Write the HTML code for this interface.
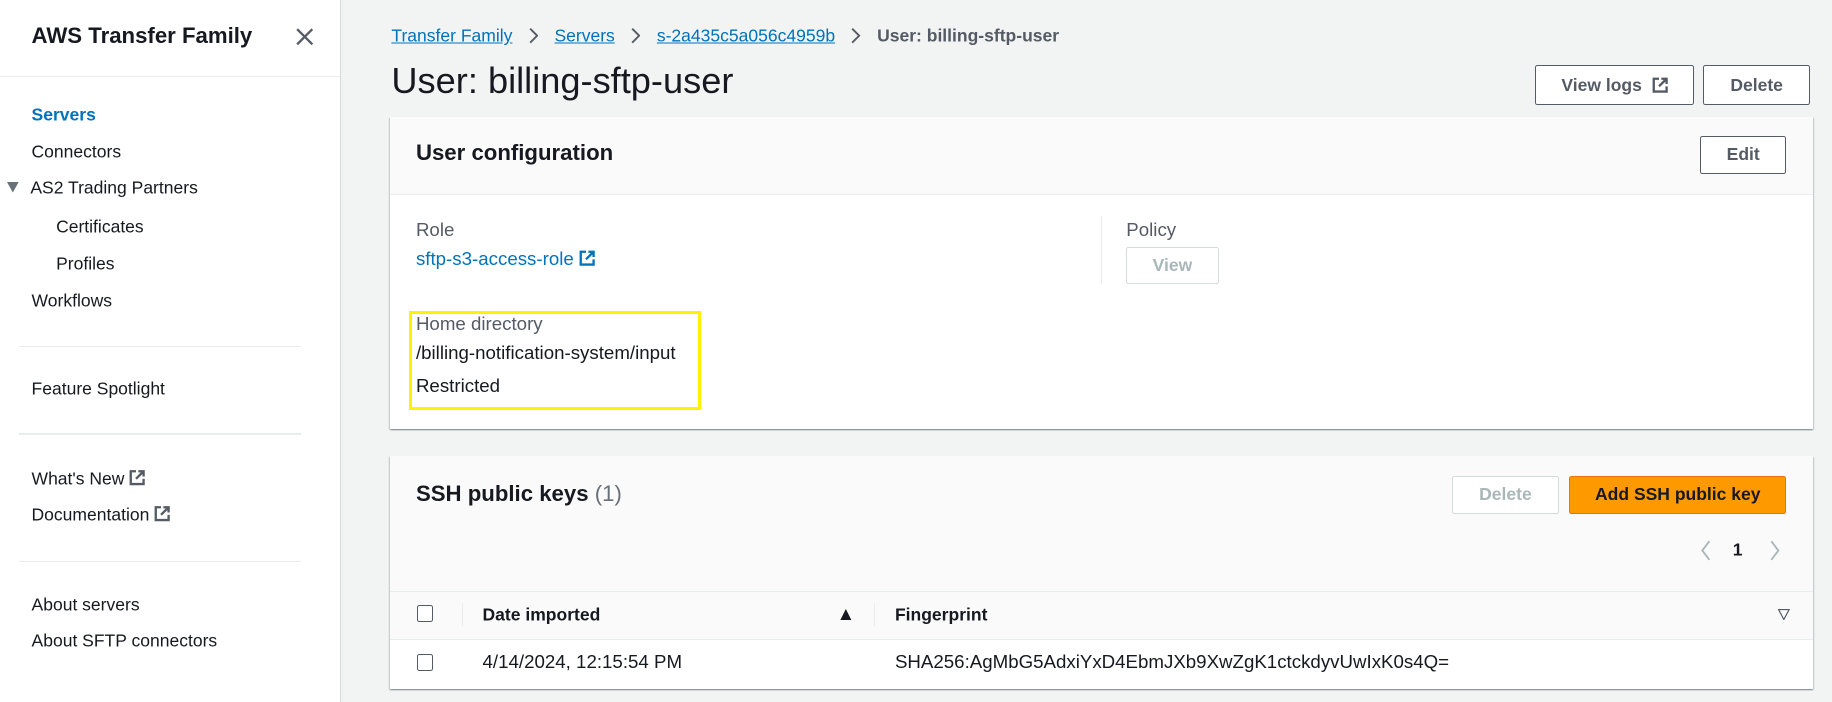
<!DOCTYPE html>
<html><head><meta charset="utf-8"><style>
html,body{margin:0;padding:0}
body{width:1568px;height:601px;zoom:1.16837;background:#f2f3f3;font-family:"Liberation Sans",sans-serif;color:#16191f;font-size:15px;position:relative;overflow:hidden}
.a{position:absolute;white-space:nowrap}
.side{position:absolute;left:0;top:0;width:291px;height:601px;background:#fff;border-right:1px solid #d5dbdb}
.hr{position:absolute;height:1px;background:#eaeded}
.nav{position:absolute;left:27px;font-size:15px;color:#16191f;transform:translateY(-50%)}
.blue{color:#0073bb}
.btn{position:absolute;box-sizing:border-box;border:1px solid #545b64;background:#fff;border-radius:2px;font-weight:bold;color:#545b64;font-size:15px;display:flex;align-items:center;justify-content:center}
.card{position:absolute;background:#fff;font-size:16px;box-shadow:0 1px 1px rgba(0,28,36,.3),1px 1px 1px rgba(0,28,36,.15),-1px 1px 1px rgba(0,28,36,.15)}
.mid{transform:translateY(-50%)}
.cb{position:absolute;width:12px;height:13px;border:1px solid #545b64;border-radius:2px;background:#fff}
.chev{display:inline-block;margin:0 14px;vertical-align:-2px}
</style></head><body>
<div class="side">
 <div class="a mid" style="left:27px;top:31px;font-size:19px;font-weight:bold">AWS Transfer Family</div>
 <svg class="a" style="left:253px;top:24px" width="15" height="15" viewBox="0 0 15 15"><path d="M1 1L14 14M14 1L1 14" stroke="#545b64" stroke-width="2"/></svg>
 <div class="hr" style="left:0;top:65px;width:291px"></div>
 <div class="nav blue" style="top:98px;font-weight:bold">Servers</div>
 <div class="nav" style="top:130px">Connectors</div>
 <div class="nav" style="top:161px;left:26px">AS2 Trading Partners</div>
 <svg class="a" style="left:6px;top:156px" width="10" height="9"><path d="M0 0H10L5 9Z" fill="#687078"/></svg>
 <div class="nav" style="top:194px;left:48px">Certificates</div>
 <div class="nav" style="top:226px;left:48px">Profiles</div>
 <div class="nav" style="top:258px">Workflows</div>
 <div class="hr" style="left:16px;top:296px;width:242px"></div>
 <div class="nav" style="top:333px">Feature Spotlight</div>
 <div class="hr" style="left:16px;top:371px;width:242px"></div>
 <div class="nav" style="top:410px">What's New <svg width="14" height="14" viewBox="0 0 14 14" style="vertical-align:-1px"><path d="M6 1.5H1.5V12.5H12.5V8M8 1.5H12.5V6M12.5 1.5L6 8" stroke="#545b64" stroke-width="2" fill="none"/></svg></div>
 <div class="nav" style="top:441px">Documentation <svg width="14" height="14" viewBox="0 0 14 14" style="vertical-align:-1px"><path d="M6 1.5H1.5V12.5H12.5V8M8 1.5H12.5V6M12.5 1.5L6 8" stroke="#545b64" stroke-width="2" fill="none"/></svg></div>
 <div class="hr" style="left:16px;top:480px;width:242px"></div>
 <div class="nav" style="top:518px">About servers</div>
 <div class="nav" style="top:549px">About SFTP connectors</div>
</div>

<div class="a mid" style="left:335px;top:31px;font-size:15px;color:#545b64"><span class="blue" style="text-decoration:underline">Transfer Family</span><svg class="chev" width="8" height="14"><path d="M1 1L7 7L1 13" stroke="#545b64" stroke-width="1.6" fill="none"/></svg><span class="blue" style="text-decoration:underline">Servers</span><svg class="chev" width="8" height="14"><path d="M1 1L7 7L1 13" stroke="#545b64" stroke-width="1.6" fill="none"/></svg><span class="blue" style="text-decoration:underline">s-2a435c5a056c4959b</span><svg class="chev" width="8" height="14"><path d="M1 1L7 7L1 13" stroke="#545b64" stroke-width="1.6" fill="none"/></svg><b>User: billing-sftp-user</b></div>
<div class="a mid" style="left:335px;top:69px;font-size:31px">User: billing-sftp-user</div>
<div class="btn" style="left:1314px;top:56px;width:136px;height:34px">View logs&nbsp;&nbsp;<svg width="14" height="14" viewBox="0 0 14 14"><path d="M6 1.5H1.5V12.5H12.5V8M8 1.5H12.5V6M12.5 1.5L6 8" stroke="#545b64" stroke-width="2" fill="none"/></svg></div>
<div class="btn" style="left:1458px;top:56px;width:91px;height:34px">Delete</div>

<div class="card" style="left:334px;top:100px;width:1218px;height:267px">
 <div style="position:absolute;left:0;top:0;right:0;height:66px;background:#fafafa;border-bottom:1px solid #eaeded"></div>
 <div class="a mid" style="left:22px;top:31px;font-size:19px;font-weight:bold">User configuration</div>
 <div class="btn" style="left:1121px;top:16px;width:74px;height:33px">Edit</div>
 <div class="a mid" style="left:22px;top:97px;color:#545b64">Role</div>
 <div class="a mid blue" style="left:22px;top:122px">sftp-s3-access-role <svg width="14" height="14" viewBox="0 0 14 14" style="vertical-align:-1px"><path d="M6 1.5H1.5V12.5H12.5V8M8 1.5H12.5V6M12.5 1.5L6 8" stroke="#0073bb" stroke-width="2" fill="none"/></svg></div>
 <div style="position:absolute;left:608px;top:85px;width:1px;height:58px;background:#eaeded"></div>
 <div class="a mid" style="left:630px;top:97px;color:#545b64">Policy</div>
 <div class="btn" style="left:630px;top:111px;width:79px;height:32px;border-color:#d5dbdb;color:#aab7b8">View</div>
 <div style="position:absolute;left:16px;top:166px;width:250px;height:85px;box-sizing:border-box;border:3px solid #fff200"></div>
 <div class="a mid" style="left:22px;top:177px;color:#545b64">Home directory</div>
 <div class="a mid" style="left:22px;top:202px">/billing-notification-system/input</div>
 <div class="a mid" style="left:22px;top:230px">Restricted</div>
</div>

<div class="card" style="left:334px;top:390px;width:1218px;height:200px">
 <div style="position:absolute;left:0;top:0;right:0;height:116px;background:#fafafa"></div>
 <div class="a mid" style="left:22px;top:33px;font-size:19px;font-weight:bold">SSH public keys <span style="font-weight:normal;color:#687078">(1)</span></div>
 <div class="btn" style="left:909px;top:17px;width:91px;height:33px;border-color:#d5dbdb;color:#aab7b8">Delete</div>
 <div class="btn" style="left:1009px;top:17px;width:186px;height:33px;border-color:#ec7211;background:#ff9900;color:#16191f">Add SSH public key</div>
 <svg class="a" style="left:1121px;top:72px" width="10" height="18"><path d="M8 1L2 9L8 17" stroke="#aab7b8" stroke-width="1.6" fill="none"/></svg>
 <div class="a mid" style="left:1149px;top:81px;font-weight:bold;font-size:15px">1</div>
 <svg class="a" style="left:1180px;top:72px" width="10" height="18"><path d="M2 1L8 9L2 17" stroke="#aab7b8" stroke-width="1.6" fill="none"/></svg>
 <div style="position:absolute;left:0;top:116px;right:0;height:40px;background:#fafafa;border-top:1px solid #eaeded;border-bottom:1px solid #eaeded"></div>
 <div class="cb" style="left:23px;top:128px"></div>
 <div style="position:absolute;left:61px;top:126px;width:1px;height:20px;background:#eaeded"></div>
 <div class="a mid" style="left:79px;top:136px;font-weight:bold;color:#16191f;font-size:15px">Date imported</div>
 <svg class="a" style="left:385px;top:131px" width="10" height="10"><path d="M0 10H10L5 0Z" fill="#16191f"/></svg>
 <div style="position:absolute;left:414px;top:126px;width:1px;height:20px;background:#eaeded"></div>
 <div class="a mid" style="left:432px;top:136px;font-weight:bold;color:#16191f;font-size:15px">Fingerprint</div>
 <svg class="a" style="left:1188px;top:131px" width="10" height="10"><path d="M0.5 0.5H9.5L5 9Z" fill="none" stroke="#545b64"/></svg>
 <div class="cb" style="left:23px;top:170px"></div>
 <div class="a mid" style="left:79px;top:177px">4/14/2024, 12:15:54 PM</div>
 <div class="a mid" style="left:432px;top:177px">SHA256:AgMbG5AdxiYxD4EbmJXb9XwZgK1ctckdyvUwIxK0s4Q=</div>
</div>
</body></html>
